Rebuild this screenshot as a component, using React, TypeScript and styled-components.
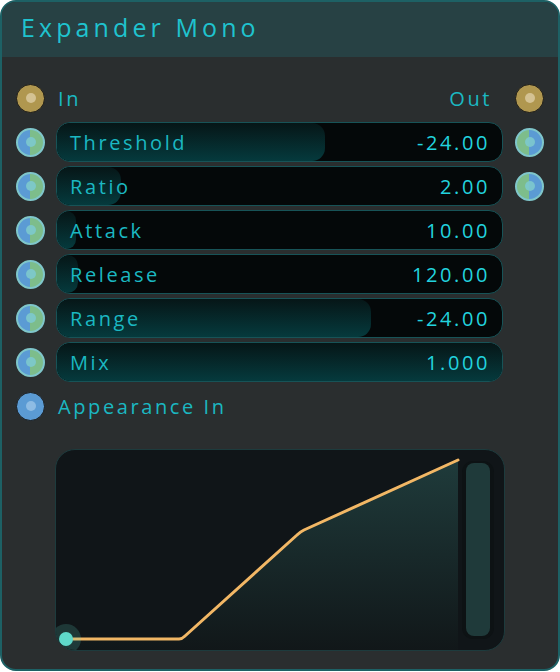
import styled, { createGlobalStyle, css } from 'styled-components';

const GlobalStyle = createGlobalStyle`
    html, body {
        margin: 0;
        padding: 0;
        background: #ffffff;
    }
    body {
        font-family: "Open Sans", "Liberation Sans", sans-serif;
    }
`;

type SocketKind = 'gold' | 'split' | 'splitRev' | 'blue';

const PARAMS = [
    { id: 0, label: 'Threshold', value: '-24.00', fill: 268, out: true },
    { id: 1, label: 'Ratio', value: '2.00', fill: 64, out: true },
    { id: 2, label: 'Attack', value: '10.00', fill: 19, out: false },
    { id: 3, label: 'Release', value: '120.00', fill: 21, out: false },
    { id: 4, label: 'Range', value: '-24.00', fill: 314, out: false },
    { id: 5, label: 'Mix', value: '1.000', fill: 447, out: false },
];

const Panel = styled.div`
    box-sizing: border-box;
    width: 560px;
    height: 671px;
    border: 2px solid #1d6165;
    border-radius: 16px;
    background: #2a2e2f;
    overflow: hidden;
    display: flex;
    flex-direction: column;
`;

const Header = styled.div`
    height: 53px;
    background: #274144;
    display: flex;
    align-items: center;
    padding-left: 19px;
    padding-bottom: 2px;
`;

const Title = styled.h1`
    margin: 0 0 4px 0;
    font-family: "Open Sans", "Liberation Sans", sans-serif;
    font-weight: 400;
    font-size: 25px;
    letter-spacing: 4.1px;
    color: #1fc3cf;
`;

const Body = styled.div`
    display: flex;
    flex-direction: column;
    gap: 4px;
    padding: 21px 14px 0 14px;
`;

const Row = styled.div`
    display: grid;
    grid-template-columns: 28px 447px 28px;
    column-gap: 12px;
    align-items: center;
    height: 40px;
`;

const socketColors = {
    gold: css`
        background: #b0974f;
        border: 1.5px solid #1a1a18;
    `,
    blue: css`
        background: #5b9bd4;
        border: 1.5px solid #1a1d1f;
    `,
    split: css`
        background: linear-gradient(90deg, #5b9bd4 50%, #7dbd8b 50%);
        border: 2px solid #7fc6ca;
    `,
    splitRev: css`
        background: linear-gradient(90deg, #7dbd8b 50%, #5b9bd4 50%);
        border: 2px solid #7fc6ca;
    `,
};

const dotColors: Record<SocketKind, string> = {
    gold: '#d8c69a',
    blue: '#93c0e6',
    split: '#7dc9cd',
    splitRev: '#7dc9cd',
};

const Socket = styled.span<{ $kind: SocketKind }>`
    box-sizing: border-box;
    width: 29px;
    height: 29px;
    border-radius: 50%;
    display: flex;
    align-items: center;
    justify-content: center;
    ${({ $kind }) => socketColors[$kind]}
    &::after {
        content: "";
        width: 10px;
        height: 10px;
        border-radius: 50%;
        background: ${({ $kind }) => dotColors[$kind]};
        opacity: 0.9;
    }
`;

const PortLabels = styled.div`
    display: flex;
    justify-content: space-between;
    padding: 0 11px 0 2px;
    font-size: 20px;
    letter-spacing: 2.6px;
    color: #1bb8c2;
`;

const Slider = styled.div`
    position: relative;
    box-sizing: border-box;
    height: 40px;
    border: 1px solid #175357;
    border-radius: 14px;
    background: #040809;
    overflow: hidden;
    display: flex;
    align-items: center;
    justify-content: space-between;
    padding: 0 12px 0 13px;
    font-size: 20px;
    letter-spacing: 2.6px;
`;

const SliderFill = styled.span`
    position: absolute;
    left: 0;
    top: 0;
    bottom: 0;
    border-radius: 13px;
    background: linear-gradient(180deg, #061617 0%, #053a3d 100%);
`;

const SliderLabel = styled.span`
    position: relative;
    color: #1bb8c2;
`;

const SliderValue = styled.span`
    position: relative;
    color: #22d3de;
`;

const AppearanceLabel = styled.span`
    font-size: 20px;
    letter-spacing: 2.6px;
    color: #1bb8c2;
    padding-left: 2px;
`;

const GraphWrap = styled.div`
    padding: 23px 53px 0 53px;
`;

const Graph = styled.div`
    box-sizing: border-box;
    width: 450px;
    height: 202px;
    border: 1px solid #1d3b3d;
    border-radius: 20px;
    background: #101518;
    overflow: hidden;
`;

function CurveGraph() {
    return (
        <Graph>
            <svg width="448" height="200" viewBox="0 0 448 200">
                <defs>
                    <linearGradient id="curveFill" x1="0" y1="0" x2="0" y2="1">
                        <stop offset="0" stopColor="#1f3b3b" />
                        <stop offset="1" stopColor="#111719" />
                    </linearGradient>
                </defs>
                <path d="M10 189 L125 189 L244 82 L402 10 L402 200 L10 200 Z" fill="url(#curveFill)" />
                <path
                    d="M10 189 L123 189 Q126 189 129 186 L241 85 Q244 82 248 80 L402 10"
                    fill="none"
                    stroke="#f2b765"
                    strokeWidth="3"
                    strokeLinecap="round"
                    strokeLinejoin="round"
                />
                <rect x="406" y="11" width="32" height="178" rx="11" fill="#0d1214" />
                <rect x="410" y="13" width="24" height="173" rx="8" fill="#1f3a3a" />
                <circle cx="10" cy="189" r="15" fill="#5dd6c8" opacity="0.18" />
                <circle cx="10" cy="189" r="7" fill="#5fd9ca" />
            </svg>
        </Graph>
    );
}

export default function App() {
    return (
        <>
            <GlobalStyle />
            <Panel>
                <Header>
                    <Title>Expander Mono</Title>
                </Header>
                <Body>
                    <Row>
                        <Socket $kind="gold" />
                        <PortLabels>
                            <span>In</span>
                            <span>Out</span>
                        </PortLabels>
                        <Socket $kind="gold" />
                    </Row>
                    {PARAMS.map((p) => (
                        <Row key={p.id}>
                            <Socket $kind="split" />
                            <Slider>
                                <SliderFill style={{ width: `${p.fill}px` }} />
                                <SliderLabel>{p.label}</SliderLabel>
                                <SliderValue>{p.value}</SliderValue>
                            </Slider>
                            {p.out ? <Socket $kind="splitRev" /> : <span />}
                        </Row>
                    ))}
                    <Row>
                        <Socket $kind="blue" />
                        <AppearanceLabel>Appearance In</AppearanceLabel>
                    </Row>
                </Body>
                <GraphWrap>
                    <CurveGraph />
                </GraphWrap>
            </Panel>
        </>
    );
}
